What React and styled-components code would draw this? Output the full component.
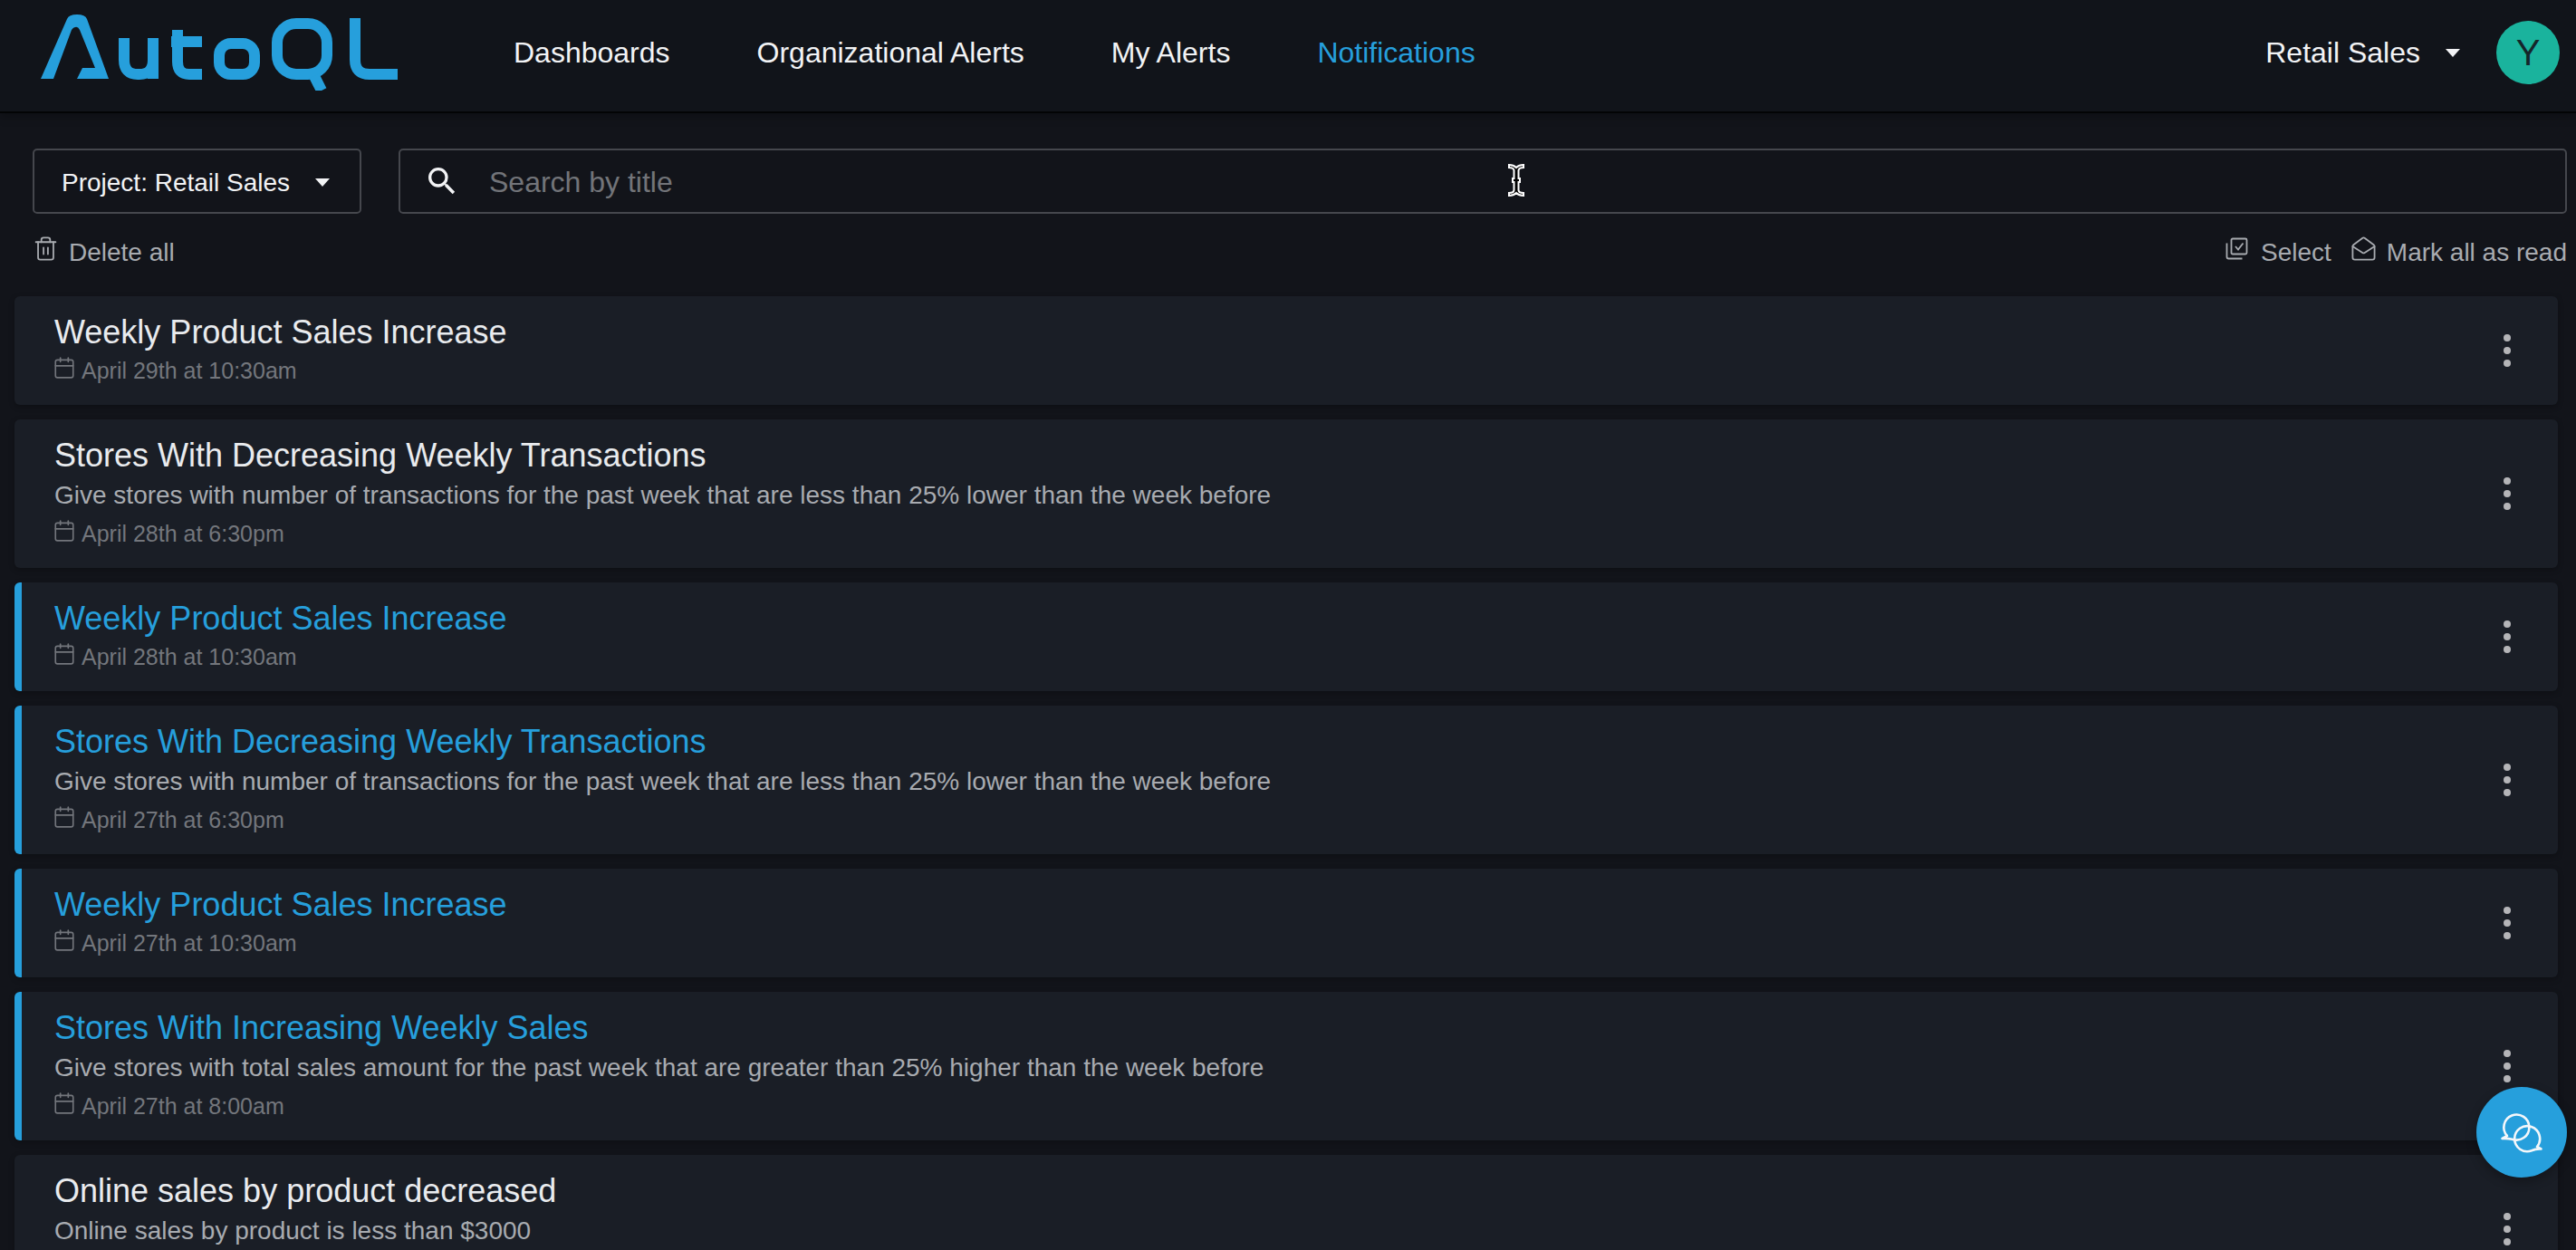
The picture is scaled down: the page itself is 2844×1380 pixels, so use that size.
import styled, { createGlobalStyle } from "styled-components"
import { Calendar, MailOpen, Trash2 } from "lucide-react"
import { MdSearch } from "react-icons/md"

const GlobalStyle = createGlobalStyle`
  html, body {
    margin: 0;
    padding: 0;
    height: 100%;
    background: #12141a;
    overflow: hidden;
  }
  * {
    box-sizing: border-box;
  }
`

const Page = styled.div`
  position: relative;
  height: 100vh;
  overflow: hidden;
  background: #12141a;
  font-family: "Liberation Sans", Arial, sans-serif;
`

const Header = styled.header`
  height: 125px;
  display: flex;
  align-items: center;
  padding: 0 18px 7px 45px;
  background: #11141a;
  border-bottom: 2px solid #030405;
  box-shadow: 0 4px 10px rgba(0, 0, 0, 0.25);
`

const LogoMark = styled.svg`
  width: 396px;
  height: 90px;
  flex: none;
  margin-top: -6px;
`

const Nav = styled.nav`
  display: flex;
  align-items: center;
  gap: 96px;
  margin-left: 126px;
`

const NavLink = styled.a`
  font-size: 32px;
  color: ${(props) => (props.$active ? "#269fdc" : "#f2f3f5")};
  text-decoration: none;
`

const HeaderRight = styled.div`
  display: flex;
  align-items: center;
  margin-left: auto;
`

const ProjectName = styled.span`
  font-size: 32px;
  color: #f2f3f5;
`

const Caret = styled.span`
  width: 0;
  height: 0;
  border-left: 8px solid transparent;
  border-right: 8px solid transparent;
  border-top: 9px solid #f2f3f5;
  margin-left: ${(props) => props.$left}px;
`

const Avatar = styled.div`
  width: 70px;
  height: 70px;
  margin-left: 40px;
  border-radius: 50%;
  background: #1ab39d;
  color: #15252a;
  font-size: 40px;
  display: flex;
  align-items: center;
  justify-content: center;
`

const Toolbar = styled.div`
  padding: 39px 10px 0 36px;
`

const FilterRow = styled.div`
  display: flex;
  gap: 41px;
`

const ProjectSelect = styled.button`
  flex: none;
  width: 363px;
  height: 72px;
  padding: 3px 33px 0 30px;
  display: flex;
  align-items: center;
  justify-content: space-between;
  background: transparent;
  border: 2px solid #45474d;
  border-radius: 5px;
  color: #f2f3f5;
  font-family: inherit;
  font-size: 28px;
`

const SearchBox = styled.div`
  flex: 1;
  height: 72px;
  padding-left: 26px;
  display: flex;
  align-items: center;
  gap: 32px;
  border: 2px solid #45474d;
  border-radius: 5px;
  color: #f2f3f5;
`

const SearchInput = styled.input`
  flex: 1;
  padding: 3px 0 0;
  background: transparent;
  border: 0;
  outline: 0;
  color: #f2f3f5;
  font-family: inherit;
  font-size: 32px;

  &::placeholder {
    color: #727479;
    opacity: 1;
  }
`

const ActionRow = styled.div`
  height: 44px;
  margin-top: 21px;
  display: flex;
  align-items: center;
  justify-content: space-between;
`

const ActionGroup = styled.div`
  display: flex;
  align-items: center;
  gap: 21px;
`

const Action = styled.span`
  display: flex;
  align-items: center;
  gap: 11px;
  font-size: 28px;
  color: #a8abb0;

  svg {
    margin-top: -9px;
    flex: none;
  }
`

const List = styled.main`
  margin: 26px 20px 0 16px;
  display: flex;
  flex-direction: column;
  gap: 16px;
`

const Card = styled.article`
  flex: none;
  padding: 18px 0 18px ${(props) => (props.$unread ? 36 : 44)}px;
  display: flex;
  align-items: center;
  justify-content: space-between;
  background: #1a1e26;
  border-left: ${(props) => (props.$unread ? "8px solid #269fdc" : "0")};
  border-radius: 6px;
  box-shadow: 0 2px 6px rgba(0, 0, 0, 0.25);
`

const CardBody = styled.div`
  min-width: 0;
`

const Title = styled.div`
  font-size: 36px;
  line-height: 44px;
  color: ${(props) => (props.$unread ? "#269fdc" : "#e9ebee")};
`

const Description = styled.div`
  font-size: 28px;
  line-height: 44px;
  color: #a8abb0;
`

const DateLine = styled.div`
  height: 40px;
  display: flex;
  align-items: center;
  gap: 6px;
  font-size: 25px;
  color: #73767c;

  svg {
    margin: -6px 0 0 -2px;
    flex: none;
  }
`

const Kebab = styled.div`
  flex: none;
  width: 8px;
  margin-right: 52px;
  display: flex;
  flex-direction: column;
  gap: 6px;
`

const Dot = styled.span`
  width: 8px;
  height: 8px;
  border-radius: 50%;
  background: #b5b5b8;
`

const ChatFab = styled.button`
  position: absolute;
  right: 10px;
  bottom: 80px;
  width: 100px;
  height: 100px;
  padding: 0;
  border: 0;
  border-radius: 50%;
  background: #269fdc;
  box-shadow: 0 4px 12px rgba(0, 0, 0, 0.3);
`

const TextCursor = styled.svg`
  position: absolute;
  left: 1664px;
  top: 180px;
  width: 20px;
  height: 38px;
`

const SelectGlyph = styled.svg`
  margin-right: 3px;
`

const AutoQLLogo = () => (
  <LogoMark viewBox="45 10 396 90" role="img" aria-label="AutoQL">
    <path
      fill="#269fdc"
      d="M45 87 L74 21 Q76 16 85 16 Q94 16 96 21 L120 87 H85 L91 75 H105 L88 33 Q86 29 83 30 Q81 30 79 33 L59 87 Z"
    />
    <g fill="none" stroke="#269fdc" strokeWidth="12">
      <path d="M137 42 V66 Q137 82 152 82 H154 Q169 82 169 66 V42 M169 60 V87" />
      <path d="M196 33 V68 Q196 82 209 82 H223 M189 46 H223" />
      <rect x="242" y="48" width="39" height="34" rx="13" />
      <rect x="306" y="26" width="55" height="56" rx="21" />
      <path d="M347 84 L355 100" />
      <path d="M392 20 V66 Q392 82 408 82 H439" />
    </g>
  </LogoMark>
)

const SelectIcon = () => (
  <SelectGlyph width="25" height="25" viewBox="0 0 25 25" fill="none" stroke="#a8abb0" strokeWidth="1.8">
    <rect x="6.5" y="1.5" width="17" height="17" rx="1.5" />
    <path d="M1.5 6.5 V21.5 Q1.5 23.5 3.5 23.5 H18.5" />
    <path d="M11 10 L14 13.5 L19.5 6.5" />
  </SelectGlyph>
)

const ChatIcon = () => (
  <svg width="100" height="100" viewBox="0 0 100 100" fill="none" stroke="#f4f7fa" strokeWidth="2.6" strokeLinejoin="round">
    <path d="M34 54 A14 14 0 1 1 39.5 57.7 Q34 56.5 28.5 57 Z" />
    <path d="M67 66 A14 14 0 1 0 61 70.3 Q66 68 71.5 68.5 Z" />
  </svg>
)

const notifications = [
  { title: "Weekly Product Sales Increase", date: "April 29th at 10:30am" },
  {
    title: "Stores With Decreasing Weekly Transactions",
    description: "Give stores with number of transactions for the past week that are less than 25% lower than the week before",
    date: "April 28th at 6:30pm",
  },
  { title: "Weekly Product Sales Increase", date: "April 28th at 10:30am", unread: true },
  {
    title: "Stores With Decreasing Weekly Transactions",
    description: "Give stores with number of transactions for the past week that are less than 25% lower than the week before",
    date: "April 27th at 6:30pm",
    unread: true,
  },
  { title: "Weekly Product Sales Increase", date: "April 27th at 10:30am", unread: true },
  {
    title: "Stores With Increasing Weekly Sales",
    description: "Give stores with total sales amount for the past week that are greater than 25% higher than the week before",
    date: "April 27th at 8:00am",
    unread: true,
  },
  {
    title: "Online sales by product decreased",
    description: "Online sales by product is less than $3000",
  },
]

export default function App() {
  return (
    <Page>
      <GlobalStyle />
      <Header>
        <AutoQLLogo />
        <Nav>
          <NavLink href="#">Dashboards</NavLink>
          <NavLink href="#">Organizational Alerts</NavLink>
          <NavLink href="#">My Alerts</NavLink>
          <NavLink href="#" $active>Notifications</NavLink>
        </Nav>
        <HeaderRight>
          <ProjectName>Retail Sales</ProjectName>
          <Caret $left={28} />
          <Avatar>Y</Avatar>
        </HeaderRight>
      </Header>

      <Toolbar>
        <FilterRow>
          <ProjectSelect>
            Project: Retail Sales
            <Caret $left={0} />
          </ProjectSelect>
          <SearchBox>
            <MdSearch size={40} />
            <SearchInput placeholder="Search by title" />
          </SearchBox>
        </FilterRow>
        <ActionRow>
          <Action>
            <Trash2 size={29} strokeWidth={1.5} />
            Delete all
          </Action>
          <ActionGroup>
            <Action>
              <SelectIcon />
              Select
            </Action>
            <Action>
              <MailOpen size={29} strokeWidth={1.5} />
              Mark all as read
            </Action>
          </ActionGroup>
        </ActionRow>
      </Toolbar>

      <List>
        {notifications.map((item, index) => (
          <Card key={index} $unread={item.unread}>
            <CardBody>
              <Title $unread={item.unread}>{item.title}</Title>
              {item.description && <Description>{item.description}</Description>}
              <DateLine>
                {item.date && <Calendar size={26} strokeWidth={1.5} />}
                {item.date}
              </DateLine>
            </CardBody>
            <Kebab>
              <Dot />
              <Dot />
              <Dot />
            </Kebab>
          </Card>
        ))}
      </List>

      <ChatFab aria-label="Open chat">
        <ChatIcon />
      </ChatFab>

      <TextCursor viewBox="0 0 20 38" fill="#000" stroke="#fff" strokeWidth="2">
        <path d="M2 2 Q7 2 10 5 Q13 2 18 2 V5 Q13 5 12.5 8 V17 H14 V21 H12.5 V30 Q13 33 18 33 V36 Q13 36 10 33 Q7 36 2 36 V33 Q7 33 7.5 30 V21 H6 V17 H7.5 V8 Q7 5 2 5 Z" />
      </TextCursor>
    </Page>
  )
}
